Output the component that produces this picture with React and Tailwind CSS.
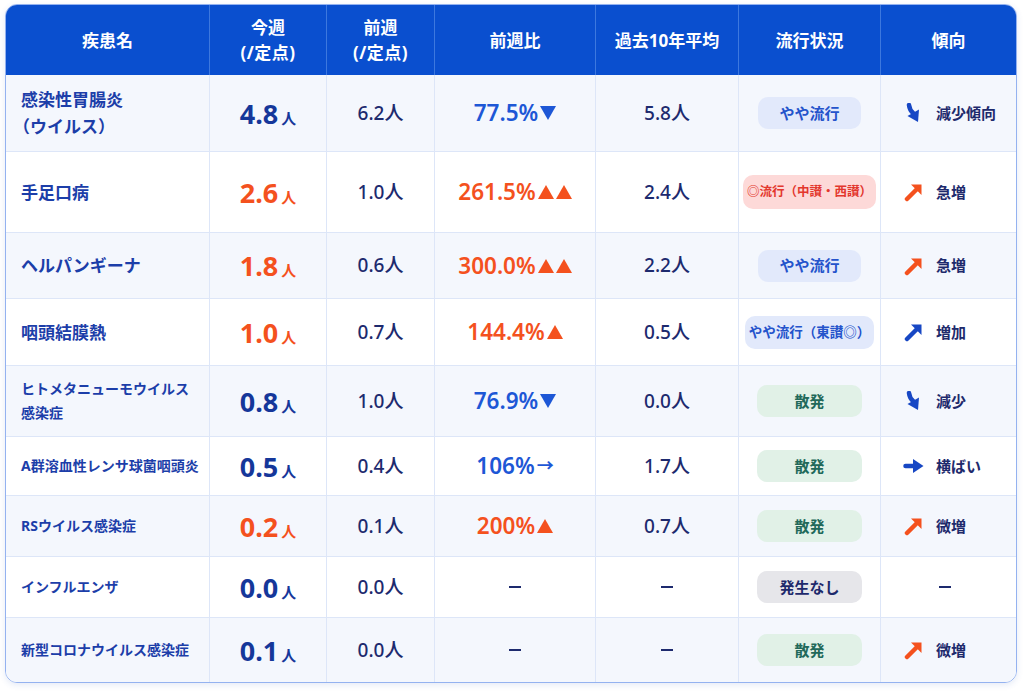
const cols = "grid grid-cols-[204px_117px_108px_161px_143px_142px_135px]";

const rows = [
  { name: ["感染性胃腸炎", "（ウイルス）"], big: true, now: "4.8", red: false, prev: "6.2", ratio: "77.5%", rc: "blue", mark: "down", avg: "5.8", badge: { t: "やや流行", k: "blue" }, trend: { i: "hook", c: "blue", t: "減少傾向" }, h: "h-[77px]" },
  { name: ["手足口病"], big: true, now: "2.6", red: true, prev: "1.0", ratio: "261.5%", rc: "red", mark: "upup", avg: "2.4", badge: { t: "◎流行（中讃・西讃）", k: "red" }, trend: { i: "up", c: "orange", t: "急増" }, h: "h-[81px]" },
  { name: ["ヘルパンギーナ"], big: true, now: "1.8", red: true, prev: "0.6", ratio: "300.0%", rc: "red", mark: "upup", avg: "2.2", badge: { t: "やや流行", k: "blue" }, trend: { i: "up", c: "orange", t: "急増" }, h: "h-[66px]" },
  { name: ["咽頭結膜熱"], big: true, now: "1.0", red: true, prev: "0.7", ratio: "144.4%", rc: "red", mark: "up", avg: "0.5", badge: { t: "やや流行（東讃◎）", k: "blue2" }, trend: { i: "up", c: "blue", t: "増加" }, h: "h-[67px]" },
  { name: ["ヒトメタニューモウイルス", "感染症"], now: "0.8", red: false, prev: "1.0", ratio: "76.9%", rc: "blue", mark: "down", avg: "0.0", badge: { t: "散発", k: "green" }, trend: { i: "hook", c: "blue", t: "減少" }, h: "h-[71px]" },
  { name: ["A群溶血性レンサ球菌咽頭炎"], now: "0.5", red: false, prev: "0.4", ratio: "106%", rc: "blue", mark: "right", avg: "1.7", badge: { t: "散発", k: "green" }, trend: { i: "right", c: "blue", t: "横ばい" }, h: "h-[59px]" },
  { name: ["RSウイルス感染症"], now: "0.2", red: true, prev: "0.1", ratio: "200%", rc: "red", mark: "up", avg: "0.7", badge: { t: "散発", k: "green" }, trend: { i: "up", c: "orange", t: "微増" }, h: "h-[61px]" },
  { name: ["インフルエンザ"], now: "0.0", red: false, prev: "0.0", ratio: null, avg: null, badge: { t: "発生なし", k: "gray" }, trend: null, h: "h-[61px]" },
  { name: ["新型コロナウイルス感染症"], now: "0.1", red: false, prev: "0.0", ratio: null, avg: null, badge: { t: "散発", k: "green" }, trend: { i: "up", c: "orange", t: "微増" }, h: "h-[64px]", last: true },
];

function Tri({ down, color }) {
  return (
    <svg width="16" height="14" viewBox="0 0 16 14" className="ml-[2px]">
      <polygon points={down ? "0,0 16,0 8,14" : "8,0 16,14 0,14"} fill={color} />
    </svg>
  );
}

function TrendIcon({ i, c }) {
  const color = c === "orange" ? "#f4511e" : "#1747c4";
  if (i === "up")
    return (
      <svg width="20" height="20" viewBox="0 0 20 20">
        <line x1="3" y1="17" x2="12" y2="8" stroke={color} strokeWidth="4.5" strokeLinecap="round" />
        <polygon points="7,2.5 17.5,2.5 17.5,13" fill={color} />
      </svg>
    );
  if (i === "right")
    return (
      <svg width="22" height="16" viewBox="0 0 22 16">
        <line x1="2.5" y1="8" x2="12" y2="8" stroke={color} strokeWidth="4.5" strokeLinecap="round" />
        <polygon points="10,1 20.5,8 10,15" fill={color} />
      </svg>
    );
  return (
    <svg width="18" height="20" viewBox="0 0 18 20">
      <path d="M4 2 Q4.5 7 8.5 10.5" stroke={color} strokeWidth="4.5" strokeLinecap="round" fill="none" />
      <polygon points="2.5,13 14,6.5 13,19" fill={color} />
    </svg>
  );
}

function Dash() {
  return <span className="block h-[2px] w-[12px] bg-[#1d2a6e]" />;
}

function Badge({ t, k }) {
  const cls = {
    blue: "w-[103px] bg-[#e2e9fb] text-[#2453cb] text-[15px]",
    blue2: "w-[129px] bg-[#e2e9fb] text-[#2453cb] text-[13.5px] h-[33px]",
    red: "w-[133px] bg-[#fdd9d8] text-[#e3372d] text-[12.5px] h-[34px]",
    green: "w-[105px] bg-[#e1f1e7] text-[#22695a] text-[15px]",
    gray: "w-[105px] bg-[#e6e6ea] text-[#1e2a6c] text-[15px]",
  }[k];
  return <div className={`flex h-[32px] items-center justify-center rounded-[10px] font-bold ${cls}`}>{t}</div>;
}

export default function App() {
  return (
    <div className="min-h-[695px] bg-white pl-[5px] pt-[4px] font-[family-name:'Noto_Sans','Noto_Sans_CJK_JP',sans-serif]">
      <div className="w-[1012px] overflow-hidden rounded-[12px] border border-[#94b2f0] shadow-[0_2px_6px_rgba(40,80,180,0.12)]">
        <div className={`${cols} h-[70px] bg-[#0a4fcf] text-[17px] font-bold leading-[25px] text-white`}>
          <div className="flex items-center justify-center border-r border-[#3d78de]">疾患名</div>
          <div className="flex flex-col items-center justify-center border-r border-[#3d78de]">
            <span>今週</span>
            <span className="tracking-[0.5px]">(/定点)</span>
          </div>
          <div className="flex flex-col items-center justify-center border-r border-[#3d78de]">
            <span>前週</span>
            <span className="tracking-[0.5px]">(/定点)</span>
          </div>
          <div className="flex items-center justify-center border-r border-[#3d78de]">前週比</div>
          <div className="flex items-center justify-center border-r border-[#3d78de]">過去10年平均</div>
          <div className="flex items-center justify-center border-r border-[#3d78de]">流行状況</div>
          <div className="flex items-center justify-center">傾向</div>
        </div>
        {rows.map((r, idx) => {
          const rc = r.rc === "red" ? "#f4511e" : "#1d57d6";
          return (
            <div
              key={idx}
              className={`${cols} ${r.h} ${r.last ? "" : "border-b border-[#dde6f8]"} ${idx % 2 === 0 ? "bg-[#f4f7fd]" : "bg-white"}`}
            >
              <div className={`flex flex-col justify-center border-r border-[#dde6f8] pl-[15px] font-bold text-[#1c3ea9] ${r.big ? "text-[17px] leading-[27px]" : "text-[14px] leading-[24px]"}`}>
                {r.name.map((n) => (
                  <span key={n} className={n.startsWith("（") ? "-ml-[8px]" : ""}>{n}</span>
                ))}
              </div>
              <div className="flex items-center justify-center border-r border-[#dde6f8] pt-[2px]">
                <span className="flex items-baseline">
                  <span className={`text-[27px] font-bold ${r.red ? "text-[#f4511e]" : "text-[#15379a]"}`}>{r.now}</span>
                  <span className={`ml-[3px] text-[15px] font-bold ${r.red ? "text-[#f4511e]" : "text-[#15379a]"}`}>人</span>
                </span>
              </div>
              <div className="flex items-center justify-center border-r border-[#dde6f8] text-[19px] font-medium text-[#1d2a6e]">
                {r.prev}人
              </div>
              <div className="flex items-center justify-center border-r border-[#dde6f8]">
                {r.ratio ? (
                  <span className="flex items-center text-[22.5px] font-semibold" style={{ color: rc }}>
                    {r.ratio}
                    {r.mark === "down" && <Tri down color={rc} />}
                    {r.mark === "up" && <Tri color={rc} />}
                    {r.mark === "upup" && (
                      <>
                        <Tri color={rc} />
                        <Tri color={rc} />
                      </>
                    )}
                    {r.mark === "right" && <span className="ml-[2px] text-[17px]">→</span>}
                  </span>
                ) : (
                  <Dash />
                )}
              </div>
              <div className="flex items-center justify-center border-r border-[#dde6f8] text-[19px] font-medium text-[#1d2a6e]">
                {r.avg ? `${r.avg}人` : <Dash />}
              </div>
              <div className="flex items-center justify-center border-r border-[#dde6f8]">
                <Badge {...r.badge} />
              </div>
              <div className="flex items-center pl-[22px]">
                {r.trend ? (
                  <>
                    <div className="flex w-[22px] justify-center">
                      <TrendIcon i={r.trend.i} c={r.trend.c} />
                    </div>
                    <span className="ml-[11px] text-[15px] font-bold text-[#1e2a6c]">{r.trend.t}</span>
                  </>
                ) : (
                  <span className="ml-[36px]">
                    <Dash />
                  </span>
                )}
              </div>
            </div>
          );
        })}
      </div>
    </div>
  );
}
